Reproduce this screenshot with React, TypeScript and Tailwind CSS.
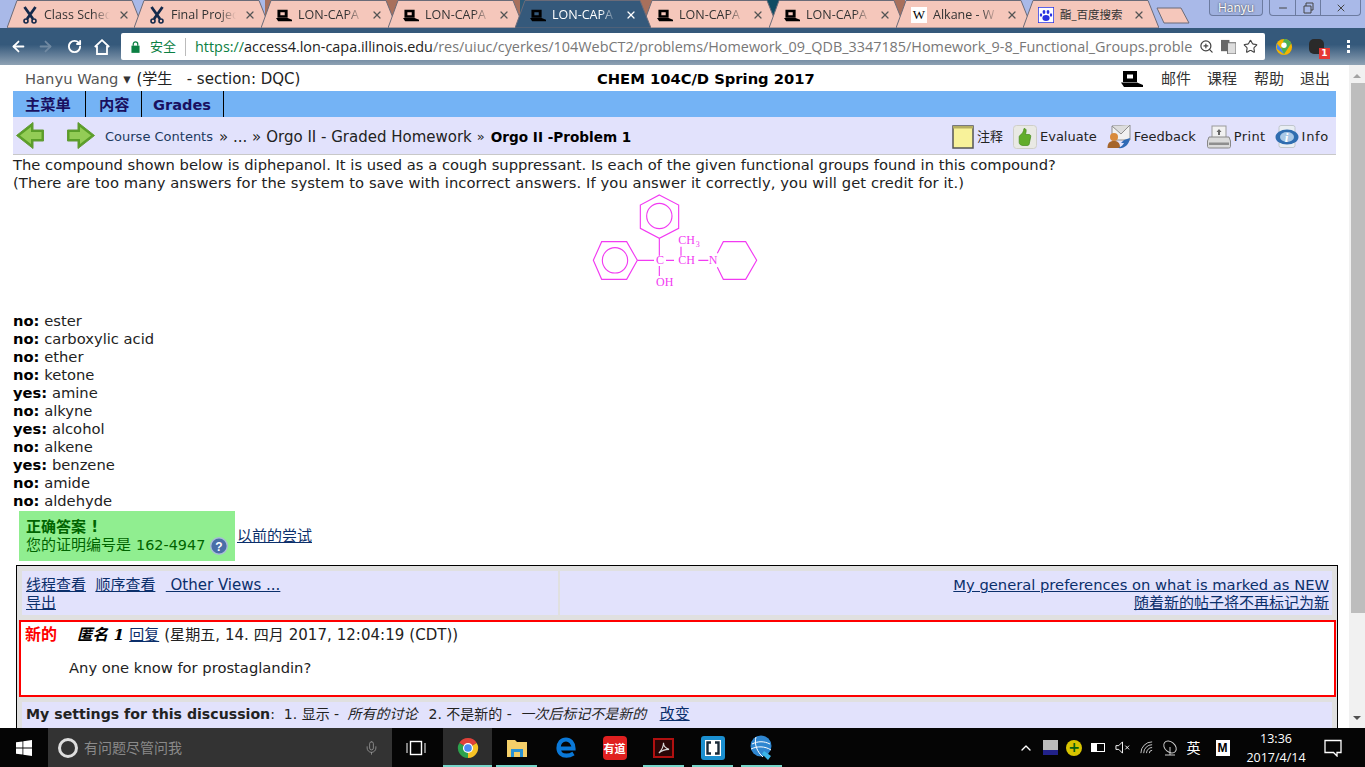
import React from "react";
import { ArrowLeft, ArrowRight, RotateCw, ZoomIn, Star, X, Mic, ChevronUp, Minus } from "lucide-react";

const font = "font-['DejaVu_Sans','Noto_Sans_CJK_SC',sans-serif]";

function Laptop({ className = "" }: { className?: string }) {
  return (
    <svg viewBox="0 0 22 16" className={className}>
      <path d="M2 0h14v11H2z M6 3.5v4h6v-4z" fillRule="evenodd" fill="#000" />
      <path d="M0 11.5h16l6 2.5v2H3z" fill="#000" />
    </svg>
  );
}

function Scissors() {
  return (
    <svg viewBox="0 0 16 18" className="w-4 h-[18px]" fill="none" stroke="#13294b">
      <path d="M2.5 1l8.5 12M13.5 1L5 13" strokeWidth="2.8" />
      <circle cx="4" cy="15" r="2" strokeWidth="1.6" />
      <circle cx="12" cy="15" r="2" strokeWidth="1.6" />
    </svg>
  );
}

function Paw() {
  return (
    <svg viewBox="0 0 16 16" className="w-4 h-4">
      <rect width="16" height="16" fill="#fff" stroke="#2932e1" strokeWidth="1.5" />
      <ellipse cx="8" cy="11" rx="3.6" ry="3" fill="#2932e1" />
      <ellipse cx="6" cy="5" rx="1.4" ry="2" fill="#2932e1" />
      <ellipse cx="10" cy="5" rx="1.4" ry="2" fill="#2932e1" />
      <ellipse cx="3" cy="8" rx="1.2" ry="1.7" fill="#2932e1" />
      <ellipse cx="13" cy="8" rx="1.2" ry="1.7" fill="#2932e1" />
    </svg>
  );
}

type TabDef = { title: string; icon: React.ReactNode; active?: boolean; plain?: boolean };

function Tab({ title, icon, active, plain }: TabDef) {
  return (
    <div className={`relative w-[136px] h-[28px] -ml-[9px] first:ml-0 shrink-0 ${active ? "z-10" : ""}`}>
      <svg viewBox="0 0 136 28" className="absolute inset-0 w-full h-full">
        <path d="M0 28 L10 0.5 H125 L136 28 Z" fill={active ? "#35597b" : "#f5c7bb"} stroke="#6b6b78" strokeWidth="1" />
      </svg>
      <div className={`relative h-full flex items-center pt-[2px] pl-[15px] pr-[14px] gap-[6px] font-['Open_Sans','Noto_Sans_CJK_SC',sans-serif] ${active ? "text-white" : "text-[#333]"}`}>
        <span className="w-4 h-4 flex items-center justify-center shrink-0">{icon}</span>
        {plain ? (
          <span className="whitespace-nowrap text-[11.5px]">{title}</span>
        ) : (
          <span className="w-[70px] whitespace-nowrap text-[12.5px] [mask-image:linear-gradient(to_right,#000_72%,transparent_97%)]">{title}</span>
        )}
        <X className={`w-3 h-3 ml-auto shrink-0 ${active ? "text-white" : "text-[#555]"}`} strokeWidth={2.5} />
      </div>
    </div>
  );
}

function TabStrip() {
  const lon = <Laptop className="w-[17px] h-[13px]" />;
  const tabs: TabDef[] = [
    { title: "Class Sched", icon: <Scissors /> },
    { title: "Final Projec", icon: <Scissors /> },
    { title: "LON-CAPA", icon: lon },
    { title: "LON-CAPA", icon: lon },
    { title: "LON-CAPA", icon: lon, active: true },
    { title: "LON-CAPA", icon: lon },
    { title: "LON-CAPA", icon: lon },
    {
      title: "Alkane - W",
      icon: <span className="w-4 h-4 bg-white flex items-center justify-center font-['Liberation_Serif',serif] text-[13px] text-black">W</span>,
    },
    { title: "酯_百度搜索", icon: <Paw />, plain: true },
  ];
  return (
    <div className="h-[28px] bg-[linear-gradient(to_right,#a9b9e8_0_265px,#a8705c_265px_520px,#2c5a78_520px_550px,#a8705c_550px_745px,#0f4c63_745px_790px,#a8705c_790px_905px,#a9b9e8_905px)] flex items-start pl-[7px]">
      {tabs.map((t, i) => (
        <Tab key={i} {...t} />
      ))}
      <svg viewBox="0 0 34 17" className="w-[34px] h-[17px] mt-[7px] -ml-[3px] shrink-0">
        <path d="M1 1 H25 L33 16 H8 Z" fill="#f5c7bb" stroke="#6b6b78" />
      </svg>
      <div className="ml-auto flex items-start pr-[4px] text-white">
        <div className="h-[16px] w-[54px] border border-[#6c7ba0] border-t-0 rounded-b-[4px] bg-[#9fb0df] text-[12px] flex items-center justify-center font-['Open_Sans',sans-serif] [text-shadow:0_0_2px_#222]">
          Hanyu
        </div>
        <div className="h-[16px] ml-[6px] w-[92px] border border-[#6c7ba0] border-t-0 rounded-b-[4px] flex items-center text-[#444]">
          <span className="w-[26px] h-full flex justify-center items-center border-r border-[#6c7ba0]"><Minus className="w-3 h-3" /></span>
          <span className="w-[25px] h-full flex justify-center items-center border-r border-[#6c7ba0]">
            <svg viewBox="0 0 12 12" className="w-3 h-3" fill="none" stroke="#444"><path d="M2 4h7v7H2zM4 4V1h7v7H9" /></svg>
          </span>
          <span className="flex-1 flex justify-center"><X className="w-3 h-3" /></span>
        </div>
      </div>
    </div>
  );
}

function Lock() {
  return (
    <svg viewBox="0 0 10 13" className="w-[9px] h-[12px] shrink-0" fill="#0b8043">
      <rect x="0.5" y="5" width="9" height="8" />
      <path d="M2.5 5V3.2a2.5 2.5 0 0 1 5 0V5" fill="none" stroke="#0b8043" strokeWidth="1.4" />
    </svg>
  );
}

function Toolbar() {
  return (
    <div className="h-[37px] bg-gradient-to-b from-[#35597b] from-45% to-[#8fa2b4] flex items-center text-white">
      <div className="w-[121px] flex items-center pl-[10px] shrink-0">
        <ArrowLeft className="w-[17px] h-[17px]" strokeWidth={2.5} />
        <ArrowRight className="w-[17px] h-[17px] ml-[10px] text-[#7089a1]" strokeWidth={2.5} />
        <RotateCw className="w-[15px] h-[15px] ml-[13px]" strokeWidth={3} />
        <svg viewBox="0 0 16 16" className="w-[16px] h-[16px] ml-[12px]" fill="none" stroke="#fff" strokeWidth="1.8">
          <path d="M0.8 8 L8 1.2 L15.2 8 M3 7 V15 H13 V7" />
        </svg>
      </div>
      <div className="h-[27px] w-[1144px] shrink-0 bg-white rounded-[2px] flex items-center pl-[10px] pr-[7px] text-[14.4px] font-['Open_Sans','Noto_Sans_CJK_SC',sans-serif] whitespace-nowrap overflow-hidden">
        <Lock />
        <span className="ml-[10px] text-[#0b8043] text-[13px]">安全</span>
        <span className="mx-[9px] w-px h-[18px] bg-[#bbb]" />
        <span className="text-[#0b8043]">https://</span>
        <span className="text-[#222]">access4.lon-capa.illinois.edu</span>
        <span className="text-[#777]">/res/uiuc/cyerkes/104WebCT2/problems/Homework_09_QDB_3347185/Homework_9-8_Functional_Groups.proble</span>
        <span className="ml-auto flex items-center gap-[7px] text-[#444] shrink-0">
          <ZoomIn className="w-[15px] h-[15px]" />
          <svg viewBox="0 0 16 16" className="w-[15px] h-[15px]"><rect x="0" y="1" width="9" height="12" fill="#666" /><rect x="7" y="4" width="9" height="12" fill="#ddd" stroke="#666" /></svg>
          <Star className="w-[15px] h-[15px]" strokeWidth={1.8} />
        </span>
      </div>
      <div className="flex-1 flex items-center pl-[10px]">
        <svg viewBox="0 0 20 20" className="w-[18px] h-[18px] shrink-0">
          <circle cx="10" cy="10" r="9" fill="#f4b400" />
          <path d="M10 1a9 9 0 0 1 8 5l-8 12-3-6z" fill="#4caf50" />
          <path d="M2 6l5 6 3 6-8-6z" fill="#4285f4" />
          <circle cx="10" cy="8" r="3" fill="#fff" />
        </svg>
        <span className="relative w-[15px] h-[15px] ml-[16px] rounded-[5px] bg-[#2a2a2a] shrink-0">
          <span className="absolute left-[10px] top-[9px] w-[11px] h-[11px] bg-[#e53935] text-[9px] leading-[11px] text-center font-bold text-white">1</span>
        </span>
        <span className="flex flex-col gap-[2px] ml-[23px]">
          <i className="w-[3px] h-[3px] bg-white" />
          <i className="w-[3px] h-[3px] bg-white" />
          <i className="w-[3px] h-[3px] bg-white" />
        </span>
      </div>
    </div>
  );
}

function GreenArrow({ dir }: { dir: "l" | "r" }) {
  const outer = dir === "l" ? "M0.5 13.5 L17 0.5 V8 H27.5 V19 H17 V26.5 Z" : "M27.5 13.5 L11 0.5 V8 H0.5 V19 H11 V26.5 Z";
  const inner = dir === "l" ? "M4 13.5 L15 5 V10 H25.5 V17 H15 V22 Z" : "M24 13.5 L13 5 V10 H2.5 V17 H13 V22 Z";
  return (
    <svg viewBox="0 0 28 27" className="w-[28px] h-[27px] block">
      <path d={outer} fill="#5a9f28" stroke="#629a37" />
      <path d={inner} fill="#93cc56" />
    </svg>
  );
}

function ToolIcon({ kind }: { kind: string }) {
  if (kind === "note")
    return (
      <svg viewBox="0 0 22 24" className="w-[22px] h-[24px]">
        <rect x="1" y="1" width="20" height="22" fill="#f8f29a" stroke="#555" strokeWidth="1.5" />
        <rect x="1" y="1" width="20" height="2.5" fill="#b5ae62" />
      </svg>
    );
  if (kind === "eval")
    return (
      <svg viewBox="0 0 24 24" className="w-[24px] h-[24px]">
        <rect x="0.5" y="0.5" width="23" height="23" rx="3" fill="#e9e9e4" stroke="#cfcfc8" />
        <path d="M11 3.5c2 0 2.5 1.5 2 3.5l-.5 2.5h3.5c1.2 0 2 1 1.7 2.2l-1.5 7.3c-.2 1-1 1.5-2 1.5H10c-1.8 0-3.8-1-3.8-3v-5.5c0-1.2.8-1.8 1.8-2.5 1.5-1 2.5-3 3-6z" fill="#62ad2a" stroke="#44881a" strokeWidth="0.7" />
      </svg>
    );
  if (kind === "feedback")
    return (
      <svg viewBox="0 0 24 24" className="w-[24px] h-[24px]">
        <path d="M5 1 L23 0 V15 H5 Z" fill="#f1f1f1" stroke="#8d8d8d" />
        <path d="M5 1l9 8 9-9" fill="#dcdcdc" stroke="#8d8d8d" />
        <circle cx="7" cy="12" r="4" fill="#d98a3a" />
        <path d="M0.5 23c0-6 3-7 6.5-7s6 1.5 6 7z" fill="#a5652c" />
        <path d="M11 23c6 1 11-3 12-10l-6 2-3 3 3 0c-1 2-3 4-6 5z" fill="#2f69b5" />
      </svg>
    );
  if (kind === "print")
    return (
      <svg viewBox="0 0 24 24" className="w-[24px] h-[24px]">
        <rect x="5" y="1" width="14" height="12" fill="#f1f1f1" stroke="#999" />
        <path d="M9.5 7l2.5-3 2.5 3h-1.5v3h-2V7z" fill="#666" />
        <path d="M2 12h20l1.5 4v5.5c0 1-1 1.5-2 1.5H2.5c-1 0-2-.5-2-1.5V16z" fill="#dadada" stroke="#888" />
        <rect x="2" y="17.5" width="20" height="2.5" fill="#8e8e8e" />
      </svg>
    );
  return (
    <svg viewBox="0 0 24 24" className="w-[24px] h-[24px]">
      <rect x="4" y="0.5" width="16" height="22" rx="2" fill="#e9eef3" stroke="#c0c6cd" />
      <ellipse cx="12" cy="12" rx="11.5" ry="7.5" fill="#2f6db0" />
      <ellipse cx="12" cy="12" rx="7" ry="5" fill="#a9c8e6" />
      <text x="12" y="17" textAnchor="middle" fontSize="13" fontStyle="italic" fontWeight="bold" fill="#fff" fontFamily="'Liberation Serif', serif">i</text>
    </svg>
  );
}

function Header() {
  return (
    <div className="h-[26px] flex items-center text-[#333] pt-[2px]">
      <div className="w-[584px] pl-[12px] whitespace-pre shrink-0">
        <span className="text-[#555]">Hanyu Wang <span className="text-[#333]">▾</span></span>
        <span className="ml-[6px] text-[#222] text-[15px]">(学生   - section: DQC)</span>
      </div>
      <b className="text-black">CHEM 104C/D Spring 2017</b>
      <div className="ml-auto pr-[6px] flex items-center text-[15px]">
        <Laptop className="w-[22px] h-[16px] mr-[18px]" />
        <span className="mr-[16px]">邮件</span>
        <span className="mr-[17px]">课程</span>
        <span className="mr-[16px]">帮助</span>
        <span>退出</span>
      </div>
    </div>
  );
}

function BlueNav() {
  return (
    <div className="h-[26px] bg-[#74b3f5] flex font-bold text-[#1a1060]">
      <span className="w-[73px] pl-[12px] pt-[2px] flex items-center border-r border-black text-[15.3px]">主菜单</span>
      <span className="w-[56px] pl-[13px] pt-[2px] flex items-center border-r border-black text-[15.3px]">内容</span>
      <span className="w-[82px] pl-[11px] pt-[2px] flex items-center border-r border-black text-[14.6px]">Grades</span>
    </div>
  );
}

function Crumbs() {
  const tools: [string, string, string][] = [
    ["note", "注释", "mr-[10px]"],
    ["eval", "Evaluate", "mr-[10px]"],
    ["feedback", "Feedback", "mr-[11px]"],
    ["print", "Print", "mr-[9px] tracking-[0.4px]"],
    ["info", "Info", "tracking-[0.7px]"],
  ];
  return (
    <div className="h-[38px] bg-[#e2e2fc] border-b border-[#c8c8c8] flex items-center text-[13px] pl-[3px] pr-[7px] pt-[2px] whitespace-nowrap">
      <span className="-mt-[2px]"><GreenArrow dir="l" /></span>
      <span className="ml-[23px] -mt-[2px]"><GreenArrow dir="r" /></span>
      <span className="ml-[10px] text-[#1d3a5f]">Course Contents</span>
      <span className="ml-[6px] text-[#222] text-[15px]">» ... »</span>
      <span className="ml-[5px] text-[#222] text-[15px]">Orgo II - Graded Homework</span>
      <span className="ml-[5px] text-[#222]">»</span>
      <b className="ml-[6px] text-black text-[13.6px]">Orgo II -Problem 1</b>
      <div className="ml-auto flex items-center text-[#222]">
        {tools.map(([k, l, c]) => (
          <span key={k} className={`flex items-center gap-[3px] ${c}`}>
            <ToolIcon kind={k} />
            {l}
          </span>
        ))}
      </div>
    </div>
  );
}

function Molecule() {
  const M = "#f23af2";
  return (
    <svg viewBox="0 0 570 315" className="w-[190px] h-[105px] block" fill="none" stroke={M} strokeWidth="3.4">
      <path d="M238 15 L296 45 V115 L238 145 L181 115 V45 Z" />
      <circle cx="238" cy="78" r="38" />
      <path d="M40 211 L65 155 H140 L172 211 L140 268 H65 Z" />
      <circle cx="105" cy="211" r="38" />
      <path d="M172 211 H222 M258 211 H282 M355 211 H385 M238 145 V197 M238 228 V258 M303 170 V197" />
      <path d="M412 190 L430 155 H497 L530 211 L497 268 H430 L412 232" />
      <g fill={M} stroke="none" fontFamily="'Liberation Serif', serif" fontSize="36">
        <text x="228" y="223">C</text>
        <text x="295" y="223">CH</text>
        <text x="295" y="162">CH</text>
        <text x="347" y="170" fontSize="24">3</text>
        <text x="386" y="223">N</text>
        <text x="228" y="288">OH</text>
      </g>
    </svg>
  );
}

const answers: [string, string][] = [
  ["no:", "ester"],
  ["no:", "carboxylic acid"],
  ["no:", "ether"],
  ["no:", "ketone"],
  ["yes:", "amine"],
  ["no:", "alkyne"],
  ["yes:", "alcohol"],
  ["no:", "alkene"],
  ["yes:", "benzene"],
  ["no:", "amide"],
  ["no:", "aldehyde"],
];

const link = "text-[#0b2f6b] underline";

function Discussion() {
  return (
    <div className="mt-[4px] ml-[3px] w-[1322px] border border-black bg-[#e0e0e0] pt-[5px] px-[5px] text-[#222] h-[200px]">
      <div className="flex gap-[2px] h-[44px]">
        <div className="w-[536px] bg-[#e2e2fc] pl-[4px] pt-[5px]">
          <div className="whitespace-pre">
            <a className={`${link} text-[15px]`}>线程查看</a>
            {"  "}
            <a className={`${link} text-[15px]`}>顺序查看</a>
            {"  "}
            <a className={`${link} text-[15px] ml-[1px]`}> Other Views ...</a>
          </div>
          <a className={`${link} text-[15px]`}>导出</a>
        </div>
        <div className="flex-1 bg-[#e2e2fc] pr-[3px] pt-[5px] text-right">
          <div><a className={link}>My general preferences on what is marked as NEW</a></div>
          <a className={`${link} text-[15px]`}>随着新的帖子将不再标记为新</a>
        </div>
      </div>
      <div className="-ml-[3px] mt-[5px] h-[77px] w-[1317px] border-2 border-[#f00] bg-white pl-[4px] pt-[4px]">
        <div className="flex items-center h-[18px] whitespace-nowrap">
          <b className="text-[#f00] w-[52px] text-[16px]">新的</b>
          <b className="italic font-['DejaVu_Serif','Noto_Sans_CJK_SC',serif] text-[15.5px] text-black">匿名 1</b>
          <a className={`${link} ml-[5px] text-[15px]`}>回复</a>
          <span className="ml-[5px] text-[15px] tracking-[0.05px]">(星期五, 14. 四月 2017, 12:04:19 (CDT))</span>
        </div>
        <div className="ml-[44px] mt-[15px]">Any one know for prostaglandin?</div>
      </div>
      <div className="mt-[5px] h-[60px] bg-[#e2e2fc] pl-[4px] pt-[3px] whitespace-pre text-[14px]">
        <b className="text-[14.15px]">My settings for this discussion</b>:  1. 显示 - <i className="ml-[4px]">所有的讨论</i>  <span className="ml-[2px]">2. 不是新的 - </span><i className="ml-[4px]">一次后标记不是新的</i>   <a className={`${link} text-[15px]`}>改变</a>
      </div>
    </div>
  );
}

function Page() {
  return (
    <div className="flex-1 min-w-0 bg-white pl-[13px] pr-[13px] overflow-hidden text-[14.72px] leading-[18px] text-[#222]">
      <Header />
      <BlueNav />
      <Crumbs />
      <div className="mt-px whitespace-nowrap">
        <div>The compound shown below is diphepanol. It is used as a cough suppressant. Is each of the given functional groups found in this compound?</div>
        <div className="tracking-[0.08px]">(There are too many answers for the system to save with incorrect answers. If you answer it correctly, you will get credit for it.)</div>
      </div>
      <div className="-mt-[2px] mb-[17px] ml-[567px] w-[190px]">
        <Molecule />
      </div>
      <div>
        {answers.map(([a, b], i) => (
          <div key={i} className="h-[18px]">
            <b className="text-black">{a}</b> {b}
          </div>
        ))}
      </div>
      <div className="flex items-start ml-[6px] mt-px">
        <div className="w-[216px] h-[50px] shrink-0 bg-[#90ee90] pl-[7px] pt-[6px] text-[#006400] leading-[19px] whitespace-nowrap">
          <b className="text-[15px]">正确答案 !</b>
          <div className="flex items-center -mt-px">
            <span className="text-[15px]">您的证明编号是</span>
            <span className="ml-[5px] text-[14.4px]">162-4947</span>
            <svg viewBox="0 0 18 18" className="w-[18px] h-[18px] ml-[5px] shrink-0">
              <circle cx="9" cy="9" r="8.3" fill="#4a6ea8" stroke="#a9bcd8" strokeWidth="1.4" />
              <text x="9" y="13.5" textAnchor="middle" fontSize="12" fontWeight="bold" fill="#fff" fontFamily="'Liberation Sans', sans-serif">?</text>
            </svg>
          </div>
        </div>
        <a className={`${link} ml-[2px] mt-[16px] text-[15px]`}>以前的尝试</a>
      </div>
      <Discussion />
    </div>
  );
}

function Scrollbar() {
  return (
    <div className="w-[16px] bg-[#f1f1f1] flex flex-col items-center shrink-0">
      <div className="h-[18px] pt-[3px] flex items-center justify-center">
        <i className="border-x-[4px] border-x-transparent border-b-[4px] border-b-[#a3a3a3]" />
      </div>
      <div className="w-[14px] ml-[1px] h-[530px] bg-[#bdbdbd]" />
      <div className="mt-auto h-[20px] flex items-center justify-center">
        <i className="border-x-[4px] border-x-transparent border-t-[4px] border-t-[#505050]" />
      </div>
    </div>
  );
}

function Cell({ on, active, children }: { on?: boolean; active?: boolean; children: React.ReactNode }) {
  return (
    <div className={`relative w-[49px] h-full flex items-center justify-center shrink-0 ${active ? "bg-[#2d2d2d]" : ""}`}>
      {children}
      {on && <span className={`absolute bottom-0 h-[2px] bg-[#76d5c9] ${active ? "inset-x-0" : "inset-x-[4px]"}`} />}
    </div>
  );
}

function Tray({ w, children }: { w: string; children: React.ReactNode }) {
  return <div className={`${w} flex items-center justify-center shrink-0`}>{children}</div>;
}

function Taskbar() {
  return (
    <div className="h-[39px] bg-[#050505] flex items-center text-white">
      <div className="w-[48px] flex justify-center shrink-0">
        <svg viewBox="0 0 16 16" className="w-4 h-4" fill="#fff">
          <path d="M0 2.3L6.5 1.4V7.6H0zM7.3 1.3L16 0V7.6H7.3zM0 8.4H6.5V14.6L0 13.7zM7.3 8.4H16V16L7.3 14.7z" />
        </svg>
      </div>
      <div className="w-[344px] h-full bg-[#333] flex items-center pl-[10px] text-[14px] text-[#8a8a8a] font-['Noto_Sans_CJK_SC',sans-serif] shrink-0">
        <span className="w-[20px] h-[20px] rounded-full border-[3px] border-[#ddd] mr-[6px]" />
        有问题尽管问我
        <Mic className="w-[15px] h-[18px] ml-auto mr-[13px] text-[#999]" strokeWidth={1.3} />
      </div>
      <div className="w-[51px] pr-[3px] flex justify-center shrink-0">
        <svg viewBox="0 0 20 16" className="w-5 h-4" fill="none" stroke="#fff"><rect x="4.5" y="1.5" width="11" height="13" strokeWidth="1.4" /><path d="M1 3v10M19 3v10" /></svg>
      </div>
      <Cell on active>
        <svg viewBox="0 0 24 24" className="w-[22px] h-[22px]">
          <path d="M12 12L2.47 6.5A11 11 0 0 1 21.53 6.5z" fill="#e0413a" />
          <path d="M12 12L21.53 6.5A11 11 0 0 1 12 23z" fill="#f7c325" />
          <path d="M12 12L12 23A11 11 0 0 1 2.47 6.5z" fill="#2ca24d" />
          <circle cx="12" cy="12" r="5.5" fill="#fff" />
          <circle cx="12" cy="12" r="4.2" fill="#4a8af4" />
        </svg>
      </Cell>
      <Cell on>
        <svg viewBox="0 0 22 20" className="w-[22px] h-[20px]">
          <path d="M1 2h8l2 2h10v15H1z" fill="#f4cf69" />
          <rect x="5" y="11" width="12" height="8" fill="#2a93d5" />
          <rect x="8" y="14" width="6" height="5" fill="#f4cf69" />
        </svg>
      </Cell>
      <Cell>
        <svg viewBox="0 0 20 21" className="w-[20px] h-[21px]" fill="none" stroke="#0a78d7" strokeWidth="4.2">
          <path d="M2.5 11.5 H17.5 C17.5 6 14 2.5 10 2.5 C5.5 2.5 2.5 6 2.5 11 C2.5 16 6 18.7 10.5 18.7 C13 18.7 15 18 17.5 16.5" />
        </svg>
      </Cell>
      <Cell>
        <span className="w-[24px] h-[24px] rounded-[4px] bg-[#e02020] text-[11px] leading-[24px] font-bold text-center font-['Noto_Sans_CJK_SC',sans-serif]">有道</span>
      </Cell>
      <Cell on>
        <span className="w-[21px] h-[20px] bg-[#2a0606] border-[2px] border-[#b01010] flex items-center justify-center">
          <svg viewBox="0 0 14 14" className="w-[13px] h-[13px]" fill="none" stroke="#d8d8d8" strokeWidth="1.2"><path d="M2 13c3-3 5-7 5-11 0 4 2 6 6 7-4 0-8 1-11 4z" /></svg>
        </span>
      </Cell>
      <Cell on>
        <svg viewBox="0 0 24 24" className="w-[24px] h-[24px]">
          <rect width="24" height="24" rx="3" fill="#1b8fd0" />
          <rect x="4" y="4" width="16" height="16" fill="#fff" />
          <path d="M10 6.5H6.5V17.5H10M14 6.5H17.5V17.5H14" fill="none" stroke="#1a2a38" strokeWidth="2.4" />
        </svg>
      </Cell>
      <Cell on>
        <svg viewBox="0 0 24 26" className="w-[24px] h-[26px]">
          <circle cx="11" cy="11" r="10.5" fill="#2f86d0" />
          <path d="M2 9c6-3 12-3 18 0M1 14c6-3 14-3 20 1M6 2c-2 7 1 15 7 20" fill="none" stroke="#fff" />
          <path d="M14 16l7 5-3 4-6-6z" fill="#3bb5e8" />
        </svg>
      </Cell>
      <div className="flex-1" />
      <Tray w="w-[24px]"><ChevronUp className="w-[16px] h-[16px]" /></Tray>
      <Tray w="w-[24px]"><span className="w-[15px] h-[15px] bg-[#bbb] border-b-[5px] border-[#22228a]" /></Tray>
      <Tray w="w-[24px]"><span className="w-[16px] h-[16px] rounded-full bg-[#d8c400] text-[#0a5f10] text-[14px] leading-[15px] font-bold text-center">+</span></Tray>
      <Tray w="w-[24px]"><span className="w-[14px] h-[9px] border border-white flex"><i className="w-[5px] bg-white" /></span></Tray>
      <Tray w="w-[24px]"><svg viewBox="0 0 16 16" className="w-[15px] h-[15px]" fill="none" stroke="#fff"><path d="M1 6h3l4-4v12l-4-4H1zM11 6l4 4M15 6l-4 4" /></svg></Tray>
      <Tray w="w-[24px]"><svg viewBox="0 0 16 16" className="w-[15px] h-[15px]" fill="none" stroke="#ccc"><path d="M2 14a12 12 0 0 1 12-12M5 14a9 9 0 0 1 9-9M8 14a6 6 0 0 1 6-6M11 14a3 3 0 0 1 3-3" /></svg></Tray>
      <Tray w="w-[24px]"><svg viewBox="0 0 16 18" className="w-[16px] h-[18px]" fill="none" stroke="#ccc"><ellipse cx="8" cy="8" rx="7" ry="5" transform="rotate(40 8 8)" /><path d="M3 16h10M8 8v8" /></svg></Tray>
      <Tray w="w-[23px]"><span className="text-[14px] font-['Noto_Sans_CJK_SC',sans-serif]">英</span></Tray>
      <Tray w="w-[35px]"><span className="w-[14px] h-[16px] bg-white text-black text-[12px] leading-[16px] font-bold text-center font-['Liberation_Sans',sans-serif]">M</span></Tray>
      <Tray w="w-[72px]">
        <div className="text-[12.5px] text-center font-['Open_Sans',sans-serif] leading-[19px]">
          <div>13:36</div>
          <div>2017/4/14</div>
        </div>
      </Tray>
      <Tray w="w-[42px]">
        <svg viewBox="0 0 18 18" className="w-[18px] h-[18px]" fill="none" stroke="#fff" strokeWidth="1.3"><path d="M1 1.5h16v12h-4v3.5l-3.5-3.5H1z" /></svg>
      </Tray>
      <div className="w-[11px] shrink-0" />
    </div>
  );
}

export default function App() {
  return (
    <div className={`w-[1365px] h-[767px] overflow-hidden flex flex-col ${font}`}>
      <TabStrip />
      <Toolbar />
      <div className="h-[663px] flex bg-white overflow-hidden">
        <Page />
        <Scrollbar />
      </div>
      <Taskbar />
    </div>
  );
}
